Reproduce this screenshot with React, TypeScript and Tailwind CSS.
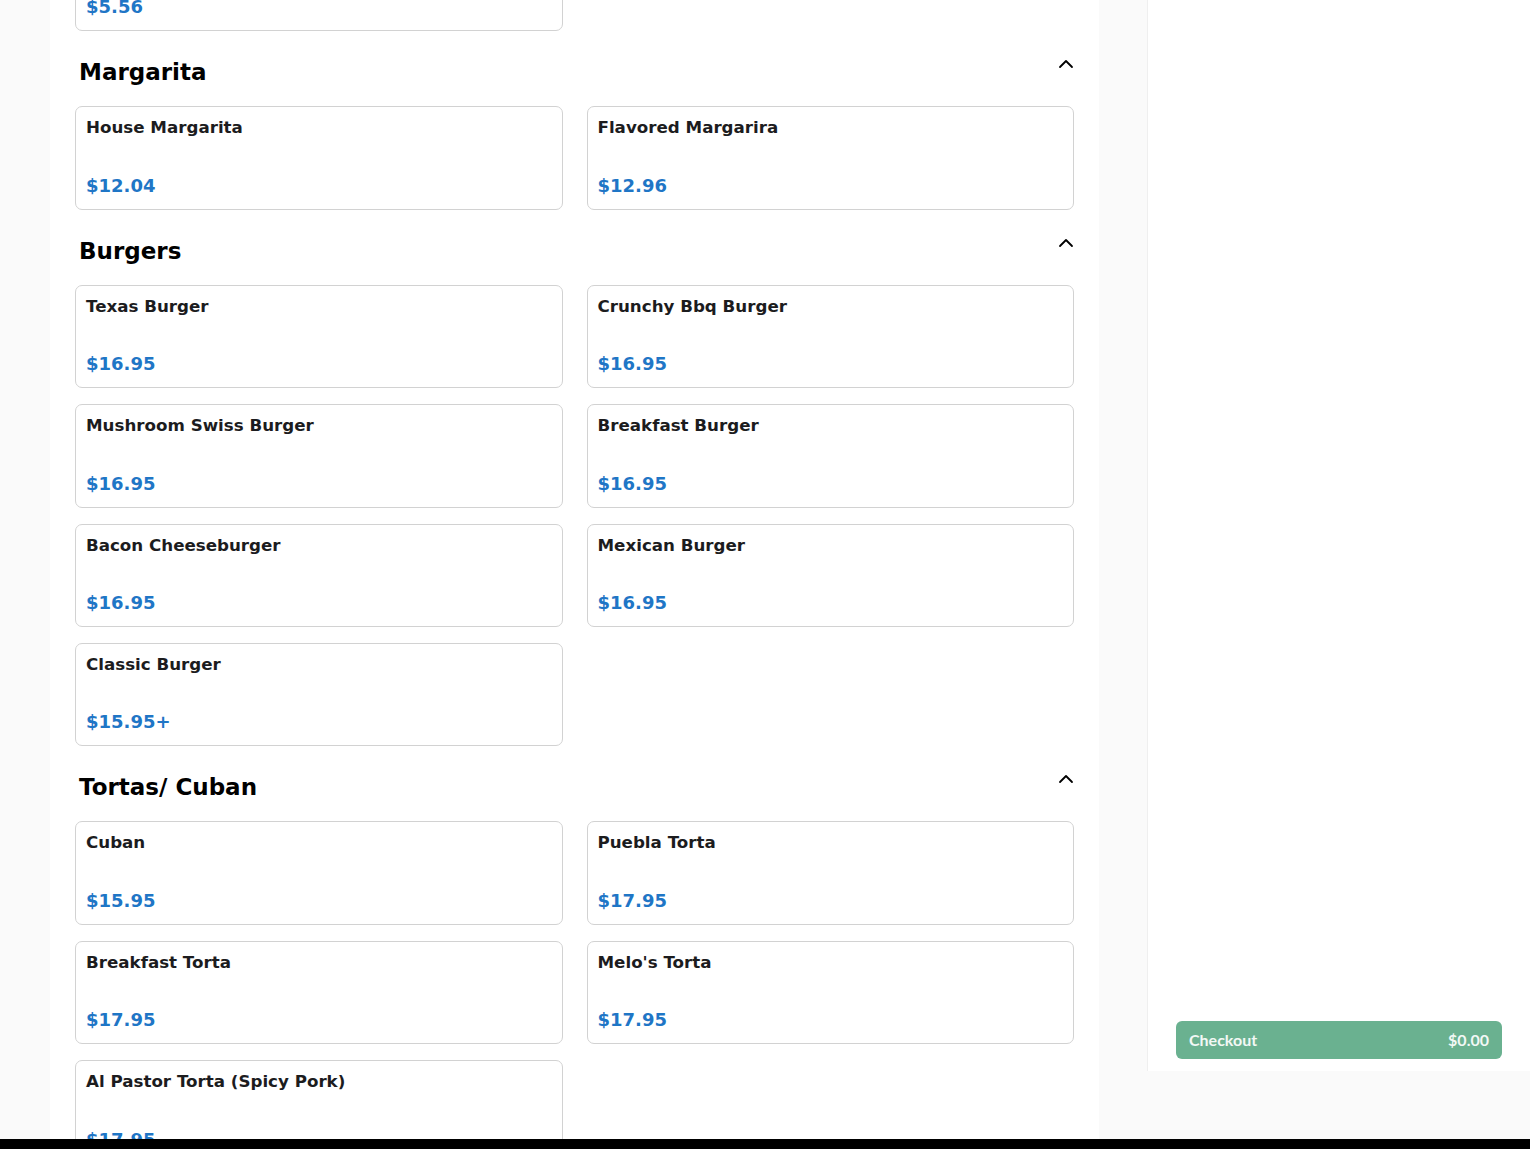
import React from 'react';

type Item = { name: string; price: string };
type Section = { title: string; items: Item[] };

const sections: Section[] = [
  {
    title: 'Margarita',
    items: [
      { name: 'House Margarita', price: '$12.04' },
      { name: 'Flavored Margarira', price: '$12.96' },
    ],
  },
  {
    title: 'Burgers',
    items: [
      { name: 'Texas Burger', price: '$16.95' },
      { name: 'Crunchy Bbq Burger', price: '$16.95' },
      { name: 'Mushroom Swiss Burger', price: '$16.95' },
      { name: 'Breakfast Burger', price: '$16.95' },
      { name: 'Bacon Cheeseburger', price: '$16.95' },
      { name: 'Mexican Burger', price: '$16.95' },
      { name: 'Classic Burger', price: '$15.95+' },
    ],
  },
  {
    title: 'Tortas/ Cuban',
    items: [
      { name: 'Cuban', price: '$15.95' },
      { name: 'Puebla Torta', price: '$17.95' },
      { name: 'Breakfast Torta', price: '$17.95' },
      { name: "Melo's Torta", price: '$17.95' },
      { name: 'Al Pastor Torta (Spicy Pork)', price: '$17.95' },
    ],
  },
];

const ItemCard: React.FC<{ item: Item }> = ({ item }) => (
  <div className="h-[103.4px] border border-[#d2d2d2] rounded-[7px] bg-white px-[10px] pt-[8px] pb-[10px] flex flex-col justify-between">
    <p className="text-[16.7px] leading-[25px] font-bold text-[#1c1c1e]">{item.name}</p>
    <p className="text-[18px] leading-[27px] font-bold text-[#1f76c6]">{item.price}</p>
  </div>
);

const ChevronUp = () => (
  <svg width="16" height="10" viewBox="0 0 16 10" className="mt-[4px] shrink-0">
    <path d="M2 8L8 2L14 8" stroke="#000" strokeWidth="1.8" fill="none" strokeLinecap="round" strokeLinejoin="round" />
  </svg>
);

export default function App() {
  return (
    <div className="min-h-screen bg-[#fafafa] flex items-start" style={{ fontFamily: '"DejaVu Sans", sans-serif' }}>
      <main className="ml-[50px] w-[1049px] bg-white px-[25px] pb-10 min-h-screen">
        <div className="-mt-[72px] grid grid-cols-2 gap-x-6 gap-y-4">
          <ItemCard item={{ name: 'Horchata', price: '$5.56' }} />
        </div>
        {sections.map((s) => (
          <section key={s.title} className="mt-6">
            <div className="flex items-start justify-between pl-1 mb-[17px]">
              <h2 className="text-[23px] leading-[34px] font-bold text-black">{s.title}</h2>
              <ChevronUp />
            </div>
            <div className="grid grid-cols-2 gap-x-6 gap-y-4">
              {s.items.map((it) => (
                <ItemCard key={it.name} item={it} />
              ))}
            </div>
          </section>
        ))}
      </main>
      <aside className="ml-[48px] w-[383px] h-[1071px] bg-white border-l border-[#efefef] px-[28px] pb-[12px] flex flex-col justify-end">
        <button
          className="h-[38px] w-full rounded-md bg-[#6ab190] px-[13px] flex items-center justify-between text-[16px] font-bold text-[#f2f8f5]"
          style={{ fontFamily: 'Lato, "Noto Sans", sans-serif' }}
        >
          <span>Checkout</span>
          <span>$0.00</span>
        </button>
      </aside>
      <div className="fixed bottom-0 left-0 right-0 h-[10px] bg-black" />
    </div>
  );
}
